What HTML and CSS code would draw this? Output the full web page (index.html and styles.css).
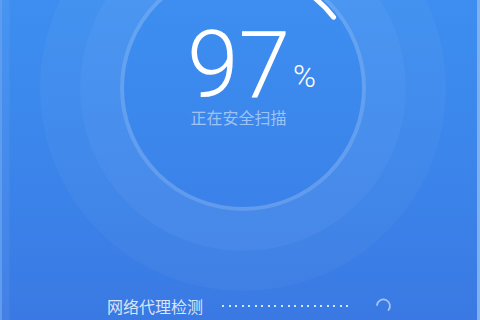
FILE: index.html
```html
<!DOCTYPE html>
<html lang="zh-CN">
<head>
<meta charset="utf-8">
<title>安全扫描</title>
<link rel="stylesheet" href="styles.css">
</head>
<body>
<main class="screen">
  <section class="dial">
    <svg class="rings" viewBox="0 0 474 292" width="474" height="292" aria-hidden="true">
      <circle cx="241" cy="88" r="183" fill="none" stroke="rgba(255,255,255,0.035)" stroke-width="40"/>
      <circle cx="241" cy="88" r="143" fill="none" stroke="rgba(255,255,255,0.07)" stroke-width="40"/>
      <circle cx="241" cy="88" r="121" fill="none" stroke="rgba(255,255,255,0.2)" stroke-width="4"/>
      <path d="M 183.5 -11.6 A 115 115 0 0 1 331.6 17.2" fill="none" stroke="#ffffff" stroke-width="5" stroke-linecap="round"/>
    </svg>
    <div class="readout">
      <div class="value"><span class="num">97<span class="pct">%</span></span></div>
      <div class="status">正在安全扫描</div>
    </div>
  </section>
  <section class="task">
    <span class="task-name">网络代理检测</span>
    <span class="dots"></span>
    <svg class="spinner" viewBox="0 0 18 18" width="18" height="18" aria-hidden="true">
      <path d="M 3 8 A 6.5 6.5 0 1 1 14.5 13" fill="none" stroke="rgba(255,255,255,0.55)" stroke-width="1.8" stroke-linecap="round"/>
    </svg>
  </section>
</main>
</body>
</html>
```

FILE: styles.css
```css
html, body {
  margin: 0;
  padding: 0;
}

body {
  width: 480px;
  height: 320px;
  overflow: hidden;
  font-family: Roboto, "Noto Sans CJK SC", sans-serif;
}

.screen {
  box-sizing: border-box;
  width: 480px;
  height: 320px;
  display: flex;
  flex-direction: column;
  border-left: 2px solid #5e9cf0;
  border-right: 3px solid #7eb0f2;
  background:
    linear-gradient(to right, rgba(255,255,255,0.05) 0, rgba(255,255,255,0.05) 7px, rgba(255,255,255,0) 8px),
    linear-gradient(to bottom, #3d8ef0 0%, #3b85eb 50%, #3a79e3 100%);
  overflow: hidden;
}

.dial {
  flex: 1;
  display: grid;
  min-height: 0;
}

.rings {
  grid-area: 1 / 1;
  display: block;
}

.readout {
  grid-area: 1 / 1;
  justify-self: center;
  align-self: start;
  padding-top: 26px;
  margin-left: -2px;
  display: flex;
  flex-direction: column;
  align-items: center;
}

.value {
  color: #ffffff;
  font-family: Roboto, sans-serif;
  font-weight: 300;
  font-size: 93px;
  line-height: 80px;
}

.num {
  position: relative;
  display: inline-block;
}

.pct {
  position: absolute;
  left: 100%;
  bottom: 14px;
  margin-left: 3px;
  font-size: 31px;
  line-height: 31px;
  font-weight: 300;
}

.status {
  margin-top: 1px;
  font-family: "Noto Sans CJK SC", sans-serif;
  font-size: 16px;
  line-height: 20px;
  color: rgba(255,255,255,0.5);
  letter-spacing: 0;
}

.task {
  height: 24px;
  display: flex;
  align-items: center;
  padding-left: 105px;
  padding-bottom: 2px;
}

.task-name {
  font-family: "Noto Sans CJK SC", sans-serif;
  font-size: 16px;
  line-height: 20px;
  color: rgba(255,255,255,0.82);
}

.dots {
  width: 130px;
  height: 2px;
  margin-left: 19px;
  background: repeating-linear-gradient(to right, rgba(255,255,255,0.8) 0 2px, transparent 2px 6.55px);
}

.spinner {
  margin-left: 22px;
  display: block;
}
```
